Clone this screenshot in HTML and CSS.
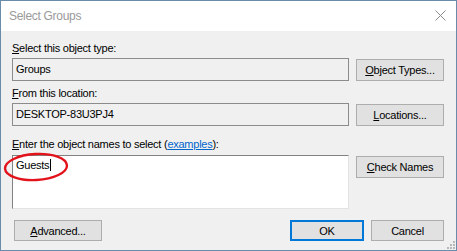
FILE: index.html
```html
<!DOCTYPE html>
<html lang="en">
<head>
  <meta charset="UTF-8">
  <title>Select Groups</title>
  <link rel="stylesheet" href="styles.css">
</head>
<body>
  <div class="window">
    <div class="titlebar">
      <span class="title">Select Groups</span>
      <svg class="close" width="11" height="11" viewBox="0 0 11 11">
        <path d="M0.5 0.5 L10.5 10.5 M10.5 0.5 L0.5 10.5" stroke="#8a8a8a" stroke-width="1" fill="none"/>
      </svg>
    </div>

    <div class="content">
      <div class="label"><u>S</u>elect this object type:</div>
      <div class="row">
        <div class="field readonly">Groups</div>
        <button class="btn"><u>O</u>bject Types...</button>
      </div>

      <div class="label second"><u>F</u>rom this location:</div>
      <div class="row">
        <div class="field readonly">DESKTOP-83U3PJ4</div>
        <button class="btn"><u>L</u>ocations...</button>
      </div>

      <div class="label third"><u>E</u>nter the object names to select (<a href="#">examples</a>):</div>
      <div class="row names-row">
        <div class="field names">Guests<span class="caret"></span></div>
        <button class="btn"><u>C</u>heck Names</button>
      </div>

      <div class="actions">
        <button class="btn advanced"><u>A</u>dvanced...</button>
        <div class="spacer"></div>
        <button class="btn ok">OK</button>
        <button class="btn cancel">Cancel</button>
      </div>
    </div>

    <!-- annotation circle -->
    <svg class="mark" width="70" height="34" viewBox="0 0 70 34">
      <ellipse cx="35" cy="16" rx="31" ry="13" transform="rotate(-3 35 16)" fill="none" stroke="#e3131c" stroke-width="2.4"/>
    </svg>

    <svg class="grip" width="10" height="10" viewBox="0 0 10 10">
      <rect x="7" y="1" width="2" height="2" fill="#b8b8b8"/>
      <rect x="4" y="4" width="2" height="2" fill="#b8b8b8"/>
      <rect x="7" y="4" width="2" height="2" fill="#b8b8b8"/>
      <rect x="1" y="7" width="2" height="2" fill="#b8b8b8"/>
      <rect x="4" y="7" width="2" height="2" fill="#b8b8b8"/>
      <rect x="7" y="7" width="2" height="2" fill="#b8b8b8"/>
    </svg>
  </div>
</body>
</html>
```

FILE: styles.css
```css
body {
  margin: 0;
  background-color: #fff;
}
.window {
  position: relative;
  width: 457px;
  height: 251px;
  box-sizing: border-box;
  border: 1px solid #6b8bab;
  background-color: #f0f0f0;
  font-family: 'Liberation Sans', Arial, sans-serif;
  font-size: 11px;
  letter-spacing: -0.25px;
  color: #000;
}
.titlebar {
  height: 30px;
  background-color: #fff;
  display: flex;
  align-items: center;
  justify-content: space-between;
  padding: 0 10px 0 8px;
}
.title {
  color: #9a9a9a;
  font-size: 12px;
  letter-spacing: -0.3px;
}
.close {
  display: block;
  margin-top: -1px;
}
.content {
  padding: 10px 12px 0 11px;
}
.label {
  height: 15px;
  line-height: 15px;
  margin-bottom: 2px;
}
.label.second {
  margin-top: 5px;
}
.label.third {
  margin-top: 11px;
  margin-bottom: 3px;
}
.label a {
  color: #0066cc;
}
.row {
  display: flex;
  gap: 7px;
  height: 23px;
}
.field {
  flex: 1;
  box-sizing: border-box;
  border: 1px solid #8c8c8c;
  padding: 0 3px;
  line-height: 21px;
}
.field.readonly {
  background-color: #f0f0f0;
}
.names-row {
  height: 54px;
}
.field.names {
  background-color: #fff;
  border-color: #828282 #e3e3e3 #e3e3e3 #828282;
  line-height: 18px;
}
.caret {
  display: inline-block;
  width: 1px;
  height: 12px;
  background-color: #000;
  vertical-align: -2px;
  margin-left: 1px;
}
.btn {
  width: 88px;
  height: 22px;
  box-sizing: border-box;
  background-color: #e1e1e1;
  border: 1px solid #adadad;
  font-family: inherit;
  font-size: 11px;
  letter-spacing: -0.25px;
  color: #000;
  padding: 0;
  margin-top: 1px;
}
.actions {
  display: flex;
  gap: 7px;
  margin-top: 11px;
}
.actions .btn {
  margin-top: 0;
  height: 21px;
}
.spacer {
  flex: 1;
}
.btn.advanced {
  margin-left: 2px;
}
.btn.ok {
  width: 74px;
  border: 2px solid #0078d7;
}
.btn.cancel {
  width: 73px;
}
.mark {
  position: absolute;
  left: 0;
  top: 150px;
}
.grip {
  position: absolute;
  right: 0;
  bottom: 0;
}
```
